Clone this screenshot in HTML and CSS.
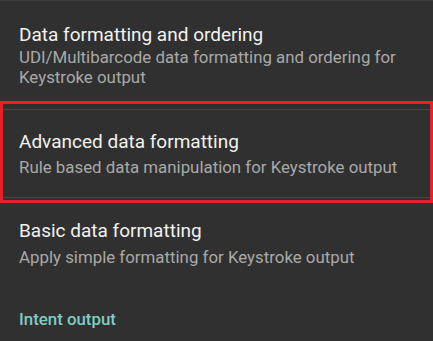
FILE: index.html
```html
<!DOCTYPE html>
<html lang="en">
<head>
  <meta charset="UTF-8">
  <meta name="viewport" content="width=device-width, initial-scale=1.0">
  <title>Keystroke output settings</title>
  <link rel="stylesheet" href="styles.css">
</head>
<body>
  <div class="pref-list">
    <div class="pref first">
      <div class="pref-title">Data formatting and ordering</div>
      <div class="pref-summary">UDI/Multibarcode data formatting and ordering for Keystroke output</div>
    </div>

    <!-- highlighted entry -->
    <div class="pref-frame">
      <div class="pref selected">
        <div class="pref-title">Advanced data formatting</div>
        <div class="pref-summary">Rule based data manipulation for Keystroke output</div>
      </div>
    </div>

    <div class="pref basic">
      <div class="pref-title">Basic data formatting</div>
      <div class="pref-summary">Apply simple formatting for Keystroke output</div>
    </div>

    <div class="pref-category">Intent output</div>
  </div>
</body>
</html>
```

FILE: styles.css
```css
body {
  margin: 0;
  background-color: #303030;
  font-family: Roboto, "Noto Sans", sans-serif;
  overflow: hidden;
}
.pref-list {
  border-top: 1px solid #3c3c3c;
  height: 340px;
}
.pref {
  padding: 0 19px;
}
.pref-title {
  color: #f2f2f2;
  font-size: 19px;
  line-height: 24px;
}
.pref-summary {
  color: #a9a9a9;
  font-size: 16.85px;
  line-height: 20px;
}
.first {
  padding-top: 22px;
  padding-bottom: 14px;
}
.first .pref-summary {
  padding-right: 8px;
}
.pref-frame {
  border: 3px solid #e8202a;
}
.selected {
  padding-left: 16px;
  border-top: 1px solid #454545;
  border-bottom: 1px solid #454545;
  margin-top: 5px;
  margin-bottom: 2px;
  padding-top: 20px;
  padding-bottom: 20px;
}
.selected .pref-summary {
  padding-top: 3px;
}
.basic {
  padding-top: 16px;
}
.basic .pref-summary {
  padding-top: 4px;
}
.pref-category {
  padding: 42px 19px 0;
  color: #80cbc4;
  font-size: 16.85px;
  font-weight: 500;
  line-height: 20px;
}
```
